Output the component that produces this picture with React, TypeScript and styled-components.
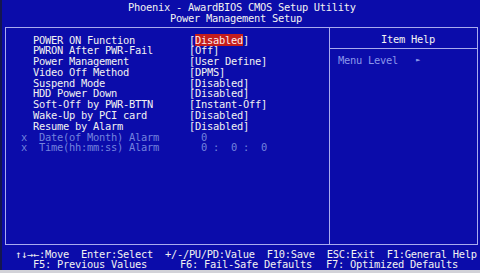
import React from "react";
import styled, { createGlobalStyle } from "styled-components";

const Global = createGlobalStyle`
  html, body { margin: 0; padding: 0; background: #0b0caa; }
  body { width: 480px; height: 273px; overflow: hidden; }
`;

const Screen = styled.div`
  width: 480px;
  height: 273px;
  box-sizing: border-box;
  background: #0b0caa;
  border-left: 2px solid #141650;
  font-family: "DejaVu Sans Mono", monospace;
  font-size: 10.4px;
  letter-spacing: -0.26px;
  line-height: 10.8px;
  color: #f2f2f2;
  display: flex;
  flex-direction: column;
  white-space: pre;
`;

const Header = styled.header`
  height: 27px;
  box-sizing: border-box;
  padding-top: 2px;
  display: flex;
  flex-direction: column;
`;

const HeaderLine = styled.div<{ $x: number }>`
  padding-left: ${(p) => p.$x - 2}px;
  height: 10.8px;
`;

const Frame = styled.main`
  margin-left: 3px;
  width: 473px;
  height: 218px;
  box-sizing: border-box;
  border: 1px solid #a9abee;
  display: grid;
  grid-template-columns: 323px 1fr;
`;

const ItemList = styled.section`
  padding: 6.5px 0 0 15px;
  display: flex;
  flex-direction: column;
`;

const Row = styled.div<{ $dim?: boolean }>`
  display: grid;
  grid-template-columns: 12px 156px auto;
  height: 10.8px;
  color: ${(p) => (p.$dim ? "#7383de" : "#f2f2f2")};
`;

const Selected = styled.span`
  background: #c41d1d;
  color: #ffeaea;
`;

const HelpPanel = styled.aside`
  border-left: 1px solid #a9abee;
  display: flex;
  flex-direction: column;
`;

const HelpTitle = styled.div`
  height: 21px;
  box-sizing: border-box;
  padding: 6px 0 0 51px;
  border-bottom: 1px solid #a9abee;
`;

const HelpBody = styled.div`
  padding: 6px 0 0 8px;
  color: #8a97ea;
  display: flex;
  align-items: center;
  height: 10.8px;
`;

const Arrow = styled.span`
  font-size: 7px;
  margin-left: 18px;
`;

const Footer = styled.footer`
  height: 25px;
  box-sizing: border-box;
  padding-top: 3.6px;
  display: flex;
  flex-direction: column;
`;

const FooterLine = styled.div<{ $x: number }>`
  padding-left: ${(p) => p.$x - 2}px;
  height: 10.8px;
  display: flex;
`;

const Cell = styled.span<{ $w?: number }>`
  display: inline-block;
  width: ${(p) => (p.$w ? `${p.$w}px` : "auto")};
`;

const Strip = styled.div`
  flex: 1;
  background: #d2d2d8;
  margin-left: -2px;
`;

type Item = { label: string; value: React.ReactNode; dim?: boolean };

const items: Item[] = [
  { label: "POWER ON Function", value: <>[<Selected>Disabled</Selected>]</> },
  { label: "PWRON After PWR-Fail", value: "[Off]" },
  { label: "Power Management", value: "[User Define]" },
  { label: "Video Off Method", value: "[DPMS]" },
  { label: "Suspend Mode", value: "[Disabled]" },
  { label: "HDD Power Down", value: "[Disabled]" },
  { label: "Soft-Off by PWR-BTTN", value: "[Instant-Off]" },
  { label: "Wake-Up by PCI card", value: "[Disabled]" },
  { label: "Resume by Alarm", value: "[Disabled]" },
  { label: " Date(of Month) Alarm", value: "  0", dim: true },
  { label: " Time(hh:mm:ss) Alarm", value: "  0 :  0 :  0", dim: true },
];

export default function App() {
  return (
    <>
      <Global />
      <Screen>
        <Header>
          <HeaderLine $x={128}>Phoenix - AwardBIOS CMOS Setup Utility</HeaderLine>
          <HeaderLine $x={170}>Power Management Setup</HeaderLine>
        </Header>
        <Frame>
          <ItemList>
            {items.map((it) => (
              <Row key={it.label} $dim={it.dim}>
                <span>{it.dim ? "x" : ""}</span>
                <span>{it.label}</span>
                <span>{it.value}</span>
              </Row>
            ))}
          </ItemList>
          <HelpPanel>
            <HelpTitle>Item Help</HelpTitle>
            <HelpBody>
              Menu Level<Arrow>►</Arrow>
            </HelpBody>
          </HelpPanel>
        </Frame>
        <Footer>
          <FooterLine $x={15}>
            ↑↓→←:Move  Enter:Select  +/-/PU/PD:Value  F10:Save  ESC:Exit  F1:General Help
          </FooterLine>
          <FooterLine $x={33}>
            <Cell $w={147}>F5: Previous Values</Cell>
            <Cell $w={146}>F6: Fail-Safe Defaults</Cell>
            <Cell>F7: Optimized Defaults</Cell>
          </FooterLine>
        </Footer>
        <Strip />
      </Screen>
    </>
  );
}
